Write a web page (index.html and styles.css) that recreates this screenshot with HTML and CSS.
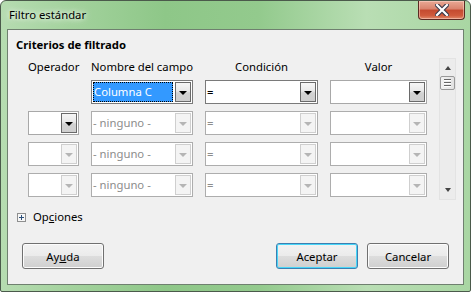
FILE: index.html
```html
<!DOCTYPE html>
<html lang="es">
<head>
  <meta charset="UTF-8" />
  <title>Filtro estándar</title>
  <link rel="stylesheet" href="styles.css">
</head>
<body>
  <div class="window">
    <div class="titlebar">
      <span class="title">Filtro estándar</span>
      <div class="close">
        <svg width="14" height="12" viewBox="0 0 14 12"><path d="M2 1 L12 11 M12 1 L2 11" stroke="#3a3a4a" stroke-width="4.4" stroke-linecap="square"/><path d="M2 1 L12 11 M12 1 L2 11" stroke="#fff" stroke-width="2.2" stroke-linecap="square"/></svg>
      </div>
    </div>

    <div class="client">
      <h2 class="section">Criterios de filtrado</h2>

      <div class="criteria">
        <div class="grid">
          <div class="head">Operador</div>
          <div class="head">Nombre del campo</div>
          <div class="head">Condición</div>
          <div class="head">Valor</div>

          <div></div>
          <div class="combo"><span class="text"><span class="focus">Columna C</span></span><span class="btn"><i class="arrow"></i></span></div>
          <div class="combo"><span class="text">=</span><span class="btn"><i class="arrow"></i></span></div>
          <div class="combo light"><span class="text"></span><span class="btn"><i class="arrow"></i></span></div>

          <div class="combo light"><span class="text"></span><span class="btn"><i class="arrow"></i></span></div>
          <div class="combo off"><span class="text">- ninguno -</span><span class="btn"><i class="arrow"></i></span></div>
          <div class="combo off"><span class="text">=</span><span class="btn"><i class="arrow"></i></span></div>
          <div class="combo off"><span class="text"></span><span class="btn"><i class="arrow"></i></span></div>

          <div class="combo off"><span class="text"></span><span class="btn"><i class="arrow"></i></span></div>
          <div class="combo off"><span class="text">- ninguno -</span><span class="btn"><i class="arrow"></i></span></div>
          <div class="combo off"><span class="text">=</span><span class="btn"><i class="arrow"></i></span></div>
          <div class="combo off"><span class="text"></span><span class="btn"><i class="arrow"></i></span></div>

          <div class="combo off"><span class="text"></span><span class="btn"><i class="arrow"></i></span></div>
          <div class="combo off"><span class="text">- ninguno -</span><span class="btn"><i class="arrow"></i></span></div>
          <div class="combo off"><span class="text">=</span><span class="btn"><i class="arrow"></i></span></div>
          <div class="combo off"><span class="text"></span><span class="btn"><i class="arrow"></i></span></div>
        </div>

        <div class="scrollbar">
          <i class="sb-up"></i>
          <div class="thumb"><i></i><i></i><i></i></div>
          <span class="sb-fill"></span>
          <i class="sb-down"></i>
        </div>
      </div>

      <div class="options">
        <svg class="expander" width="9" height="9" viewBox="0 0 9 9"><rect x="0.5" y="0.5" width="8" height="8" fill="#f7f7f7" stroke="#8e8f8f"/><path d="M2 4.5 H7 M4.5 2 V7" stroke="#2b4f7a" stroke-width="1"/></svg>
        <span>Op<u>c</u>iones</span>
      </div>

      <div class="buttons">
        <button>Ay<u>u</u>da</button>
        <span class="spacer"></span>
        <button class="default">Aceptar</button>
        <button>Cancelar</button>
      </div>
    </div>
  </div>
</body>
</html>
```

FILE: styles.css
```css
body { margin: 0; font-family: "Noto Sans", "Open Sans", sans-serif; font-size: 11.3px; color: #000; background: #fff; }
.window { width: 471px; height: 292px; box-sizing: border-box; border: 1px solid #4b5a4b; border-radius: 6px 6px 2px 2px; padding: 0 6px 6px 6px; background: linear-gradient(90deg, #b6dcb1 0%, #a3d29d 15%, #8ec788 35%, #93ca8d 55%, #b9deb4 78%, #a9d6a3 100%); display: flex; flex-direction: column; }
.titlebar { height: 28px; display: flex; align-items: flex-start; padding-left: 2px; margin-right: -1px; }
.title { padding-top: 6px; line-height: 16px; text-shadow: 0 0 8px #fff, 0 0 4px #eaf6e8; }
.close { margin-left: auto; width: 45px; height: 18px; border: 1px solid #5a2a22; border-top: none; border-radius: 0 0 4px 4px; background: linear-gradient(#e9a995 0%, #d9826c 45%, #c44a2f 50%, #cf5a3c 80%, #e08a6a 100%); display: flex; align-items: center; justify-content: center; box-shadow: inset 0 0 0 1px rgba(255,220,210,0.5); }
.client { flex: 1; border: 1px solid #6f806f; background: #f0f0f0; padding-top: 7px; display: flex; flex-direction: column; }
.section { margin: 0; padding-left: 8px; font-size: 11.3px; font-weight: bold; line-height: 16px; }
.criteria { display: flex; align-items: flex-start; margin-top: 5px; padding-left: 20px; }
.grid { display: grid; grid-template-columns: 51px 102px 113px 97px; grid-template-rows: 13px repeat(4, 24px); column-gap: 12px; row-gap: 7px; margin-top: 2px; }
.head { text-align: center; line-height: 13px; white-space: nowrap; }
.combo { display: flex; box-sizing: border-box; height: 24px; border: 1px solid #7a7a7a; background: #fff; }
.combo .text { flex: 1; display: flex; align-items: center; padding: 0 1px; line-height: 20px; white-space: nowrap; overflow: hidden; }
.combo .focus { flex: 1; align-self: stretch; display: flex; align-items: center; margin: 1px 0; padding-left: 1px; background: #3399ff; color: #fff; outline: 1px dotted #000; outline-offset: -1px; }
.combo .btn { width: 16px; margin: 1px; box-sizing: border-box; border: 1px solid #6a6a6a; background: linear-gradient(#f6f6f6, #e8e8e8 45%, #d2d2d2 55%, #cfcfcf); display: flex; align-items: center; justify-content: center; }
.arrow { width: 0; height: 0; border-left: 4px solid transparent; border-right: 4px solid transparent; border-top: 4px solid #000; margin-top: 1px; }
.combo.light { border-color: #a8a8a8; }
.combo.off { border-color: #adadad; color: #8d8d8d; }
.combo.off .btn { border-color: #cfcfcf; background: #f4f4f4; }
.combo.off .arrow { border-top-color: #b5b5b5; }
.scrollbar { margin-left: 12px; width: 17px; height: 142px; box-sizing: border-box; border: 1px solid #e3e3e3; background: #ececec; display: flex; flex-direction: column; align-items: center; }
.sb-up, .sb-down { width: 0; height: 0; border-left: 3.5px solid transparent; border-right: 3.5px solid transparent; }
.sb-up { margin-top: 7px; border-bottom: 4px solid #444; }
.sb-down { margin-bottom: 7px; border-top: 4px solid #444; }
.thumb { margin-top: 6px; width: 15px; height: 14px; box-sizing: border-box; border: 1px solid #999; border-radius: 2px; background: linear-gradient(90deg, #f2f2f2, #e2e2e2); display: flex; flex-direction: column; align-items: center; justify-content: center; gap: 1px; }
.thumb i { width: 7px; height: 1px; background: #666; border-bottom: 1px solid #fff; }
.sb-fill { flex: 1; }
.options { display: flex; align-items: center; gap: 7px; margin-top: 9px; padding-left: 9px; line-height: 16px; }
.expander { display: block; }
.buttons { display: flex; gap: 9px; margin-top: 18px; padding: 0 14px; }
.spacer { flex: 1; }
button { width: 82px; height: 26px; font-family: inherit; font-size: 11.3px; color: #000; border: 1px solid #707070; border-radius: 3px; background: linear-gradient(#f2f2f2 0%, #ebebeb 50%, #dddddd 51%, #cfcfcf 100%); box-shadow: inset 0 0 0 1px #fcfcfc; padding: 0; }
button.default { border-color: #3c7fb1; box-shadow: inset 0 0 0 1px #48d6f8; }
```
